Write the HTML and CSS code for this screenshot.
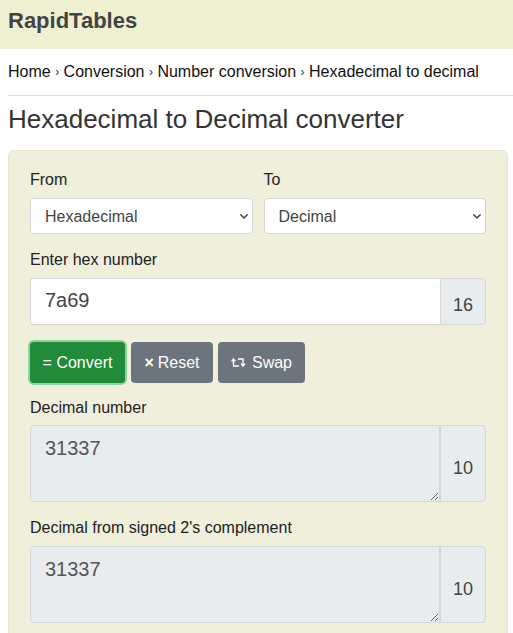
FILE: index.html
```html
<!DOCTYPE html>
<html lang="en">
<head>
<meta charset="utf-8">
<title>Hexadecimal to Decimal converter</title>
<link rel="stylesheet" href="styles.css">
</head>
<body>
<header class="topbar"><span class="logo">RapidTables</span></header>
<nav class="crumbs">Home <span class="sep">›</span> Conversion <span class="sep">›</span> Number conversion <span class="sep">›</span> Hexadecimal to decimal</nav>
<h1 class="title">Hexadecimal to Decimal converter</h1>
<main class="card">
  <div class="row2">
    <div class="col">
      <label class="lbl">From</label>
      <div class="selwrap">
        <select class="sel"><option>Hexadecimal</option></select>
        <svg class="chev" width="10" height="7" viewBox="0 0 10 7"><path d="M1.8 1.8 L5 5 L8.2 1.8" fill="none" stroke="#444" stroke-width="1.5" stroke-linecap="round" stroke-linejoin="round"/></svg>
      </div>
    </div>
    <div class="col">
      <label class="lbl">To</label>
      <div class="selwrap">
        <select class="sel"><option>Decimal</option></select>
        <svg class="chev" width="10" height="7" viewBox="0 0 10 7"><path d="M1.8 1.8 L5 5 L8.2 1.8" fill="none" stroke="#444" stroke-width="1.5" stroke-linecap="round" stroke-linejoin="round"/></svg>
      </div>
    </div>
  </div>
  <div class="group">
    <label class="lbl">Enter hex number</label>
    <div class="igroup">
      <input class="inp" type="text" value="7a69">
      <span class="addon addon-in">16</span>
    </div>
  </div>
  <div class="btns">
    <button class="btn btn-green">= Convert</button>
    <button class="btn btn-gray btn-reset"><span class="x">×</span> Reset</button>
    <button class="btn btn-gray btn-swap"><svg class="swap" width="15" height="11" viewBox="0 0 15 11"><path d="M2.5 2.6 V9 H8" fill="none" stroke="#fff" stroke-width="1.4"/><path d="M0.6 4.4 L2.5 2 L4.4 4.4" fill="none" stroke="#fff" stroke-width="1.4"/><path d="M7 2 H12 V8.4" fill="none" stroke="#fff" stroke-width="1.4"/><path d="M10.1 6.6 L12 9 L13.9 6.6" fill="none" stroke="#fff" stroke-width="1.4"/></svg> Swap</button>
  </div>
  <div class="group group-after-btns">
    <label class="lbl">Decimal number</label>
    <div class="igroup">
      <textarea class="ta" readonly>31337</textarea>
      <span class="addon addon-ta">10</span>
    </div>
  </div>
  <div class="group">
    <label class="lbl">Decimal from signed 2's complement</label>
    <div class="igroup">
      <textarea class="ta" readonly>31337</textarea>
      <span class="addon addon-ta">10</span>
    </div>
  </div>
</main>
</body>
</html>
```
FILE: styles.css
```css
* { box-sizing: border-box; }
body {
  margin: 0;
  font-family: "Liberation Sans", Arial, sans-serif;
  color: #222;
  background: #fff;
}
.topbar {
  height: 49px;
  background: #eff0d1;
  padding: 0 8px;
  display: flex;
  align-items: center;
}
.logo {
  font-weight: bold;
  font-size: 22px;
  color: #444;
  margin-top: -8px;
}
.crumbs {
  margin-left: 8px;
  padding: 12px 0 11px;
  line-height: 22px;
  font-size: 16px;
  color: #111;
  border-bottom: 1px solid #ddd;
}
.sep { font-size: 12px; position: relative; top: -1px; color: #333; }
.title {
  margin: 8px 0 16px 8px;
  font-size: 26px;
  line-height: 30px;
  font-weight: normal;
  color: #333;
}
.card {
  margin: 0 5px 0 8px;
  background: #f0efdc;
  border: 1px solid #e6e5d0;
  border-radius: 6px;
  padding: 19px 21px 20px 21px;
  min-height: 500px;
}
.row2 { display: flex; gap: 11px; }
.col { flex: 1; }
.lbl {
  display: block;
  font-size: 16px;
  line-height: 20px;
  margin-bottom: 8px;
  color: #222;
}
.selwrap { position: relative; }
.sel {
  appearance: none;
  -webkit-appearance: none;
  width: 100%;
  height: 36px;
  border: 1px solid #d5d5d5;
  border-radius: 4px;
  background: #fff;
  font-family: inherit;
  font-size: 16px;
  color: #444;
  padding: 0 14px;
}
.chev { position: absolute; right: 4px; top: 15px; pointer-events: none; }
.group { margin-top: 16px; }
.group-after-btns { margin-top: 15px; }
.group-after-btns .lbl { margin-bottom: 7px; }
.igroup { display: flex; }
.inp {
  flex: 1;
  height: 47px;
  border: 1px solid #d5d5d5;
  border-right: none;
  border-radius: 4px 0 0 4px;
  background: #fff;
  font-family: inherit;
  font-size: 20px;
  color: #444;
  padding: 0 14px 3px;
  outline: none;
}
.addon {
  width: 46px;
  background: #e9ecef;
  border: 1px solid #d5d5d5;
  border-radius: 0 4px 4px 0;
  display: flex;
  justify-content: center;
  align-items: center;
  font-size: 18px;
  color: #444;
}
.addon-in { padding-top: 8px; }
.addon-ta { padding-top: 10px; }
.btns { display: flex; gap: 5px; margin-top: 17px; }
.btn {
  height: 41px;
  border: none;
  border-radius: 4px;
  color: #fff;
  font-family: inherit;
  font-size: 16px;
  padding: 0;
  display: flex;
  align-items: center;
  justify-content: center;
  gap: 4px;
  white-space: nowrap;
}
.btn-green {
  background: #218b3a;
  box-shadow: 0 0 0 2px #8ed29c;
  width: 95px;
}
.btn-gray { background: #6c757d; }
.btn-reset { width: 82px; margin-left: 1px; }
.btn-swap { width: 87px; }
.x { font-weight: bold; font-size: 16px; }
.swap { margin-right: 2px; }
.ta {
  flex: 1;
  height: 77px;
  background: #e9ecef;
  border: 1px solid #d5d5d5;
  border-radius: 4px 0 0 4px;
  font-family: inherit;
  font-size: 20px;
  color: #555;
  padding: 11px 14px;
  resize: vertical;
  outline: none;
}
```
